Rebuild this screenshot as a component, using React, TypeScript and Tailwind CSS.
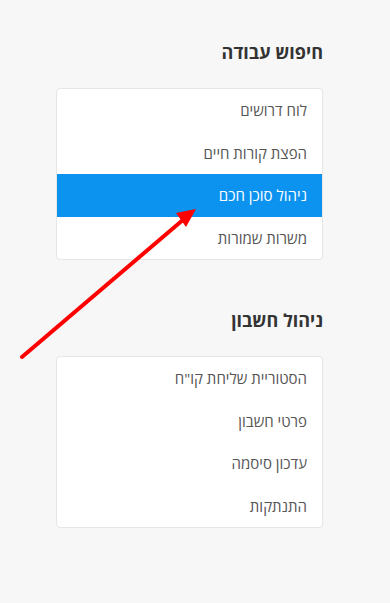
const jobLinks = ['לוח דרושים', 'הפצת קורות חיים', 'ניהול סוכן חכם', 'משרות שמורות']
const accountLinks = ['הסטוריית שליחת קו"ח', 'פרטי חשבון', 'עדכון סיסמה', 'התנתקות']

function Section({ title, links, active }: { title: string; links: string[]; active?: number }) {
  return (
    <div className="w-[267px]">
      <h3 className="h-6 text-[18px] leading-6 font-bold text-[#333]">{title}</h3>
      <div className="mt-6 bg-white border border-[#e6e6e6] rounded overflow-hidden">
        {links.map((l, i) => (
          <div
            key={l}
            className={
              i === active
                ? 'h-[42.5px] pr-[15px] flex items-center text-[15px] text-white bg-[#0b93ef]'
                : 'h-[42.5px] pr-[15px] flex items-center text-[15px] text-[#555]'
            }
          >
            {l}
          </div>
        ))}
      </div>
    </div>
  )
}

export default function App() {
  return (
    <div
      dir="rtl"
      className="relative min-h-[603px] bg-[#f7f7f7] pt-10 pr-[67px] flex flex-col items-start gap-12"
      style={{ fontFamily: '"Open Sans", "Liberation Sans", "DejaVu Sans", sans-serif' }}
    >
      <Section title="חיפוש עבודה" links={jobLinks} active={2} />
      <Section title="ניהול חשבון" links={accountLinks} />
      <svg className="absolute left-0 top-0 pointer-events-none" width="390" height="603" viewBox="0 0 390 603">
        <line x1="22" y1="357" x2="184" y2="219" stroke="#ff0000" strokeWidth="4" strokeLinecap="round" />
        <polygon points="196,209 176,213 186,227" fill="#ff0000" />
      </svg>
    </div>
  )
}
